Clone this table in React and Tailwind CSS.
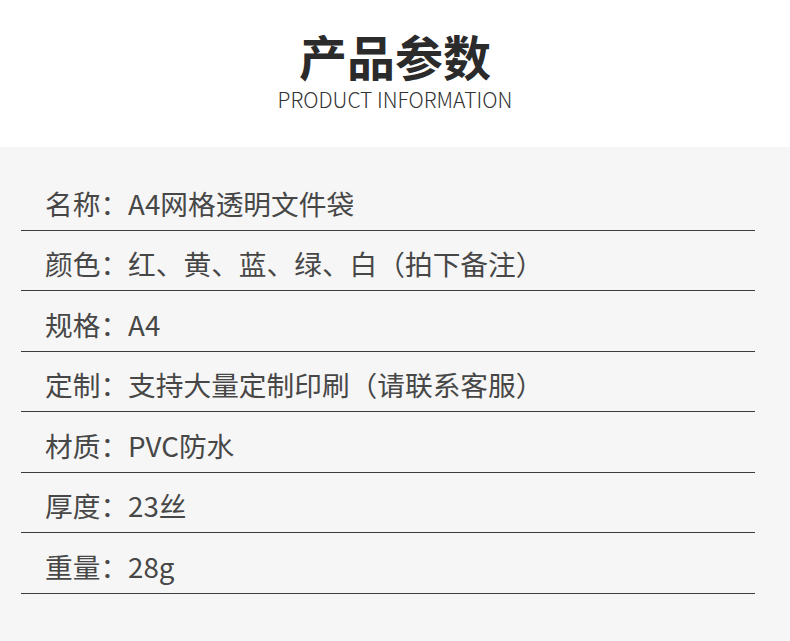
export default function App() {
  const rows = [
    ["名称", "A4网格透明文件袋"],
    ["颜色", "红、黄、蓝、绿、白（拍下备注）"],
    ["规格", "A4"],
    ["定制", "支持大量定制印刷（请联系客服）"],
    ["材质", "PVC防水"],
    ["厚度", "23丝"],
    ["重量", "28g"],
  ];

  return (
    <div
      className="w-[790px] h-[641px] overflow-hidden bg-[#f6f6f6]"
      style={{ fontFamily: '"Noto Sans CJK SC", "Noto Sans", sans-serif' }}
    >
      {/* header */}
      <div className="h-[147px] bg-white flex flex-col items-center pt-[27px]">
        <h1 className="text-[48px] leading-[56px] font-bold text-[#2b2b2b]">
          产品参数
        </h1>
        <p className="mt-[3px] text-[21px] leading-[26px] font-light text-[#333]">
          PRODUCT INFORMATION
        </p>
      </div>

      {/* params */}
      <div className="pt-[23px] pl-[21px] w-[755px]">
        {rows.map(([k, v], i) => (
          <div
            key={i}
            className="h-[60.5px] pt-[8px] pl-[24px] flex items-center border-b border-[#3d3d3d] text-[27.7px] text-[#474747]"
          >
            {k}：{v}
          </div>
        ))}
      </div>
    </div>
  );
}
